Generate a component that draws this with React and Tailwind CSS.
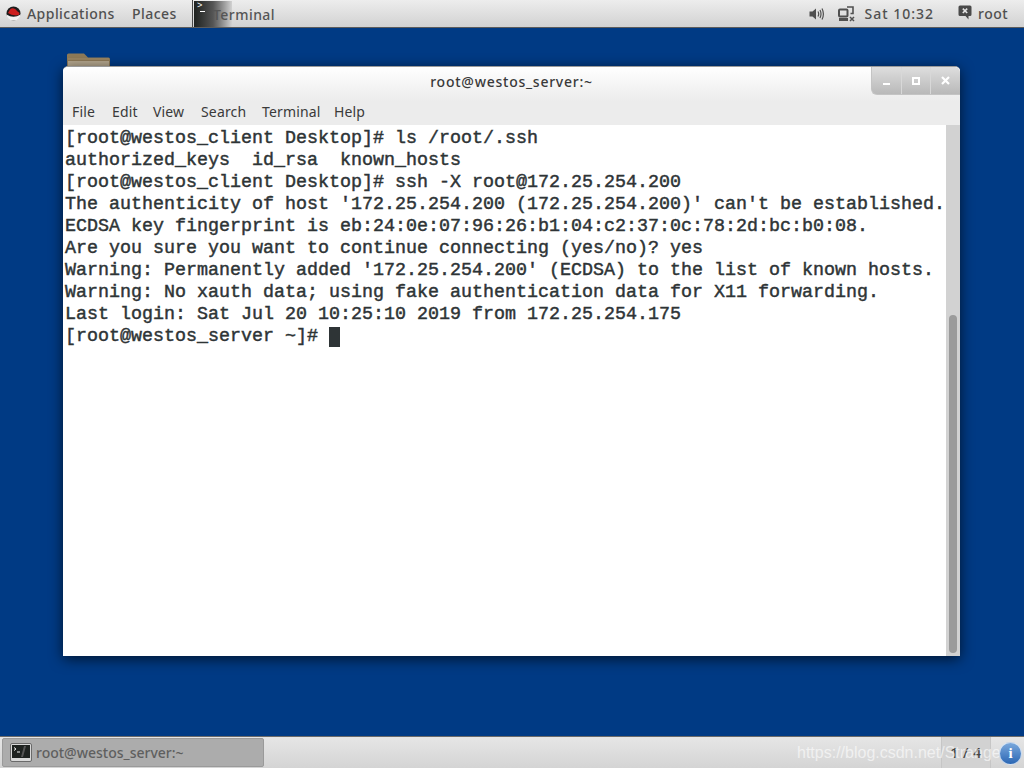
import React from 'react';

const terminalLines = [
  '[root@westos_client Desktop]# ls /root/.ssh',
  'authorized_keys  id_rsa  known_hosts',
  '[root@westos_client Desktop]# ssh -X root@172.25.254.200',
  "The authenticity of host '172.25.254.200 (172.25.254.200)' can't be established.",
  'ECDSA key fingerprint is eb:24:0e:07:96:26:b1:04:c2:37:0c:78:2d:bc:b0:08.',
  'Are you sure you want to continue connecting (yes/no)? yes',
  "Warning: Permanently added '172.25.254.200' (ECDSA) to the list of known hosts.",
  'Warning: No xauth data; using fake authentication data for X11 forwarding.',
  'Last login: Sat Jul 20 10:25:10 2019 from 172.25.254.175',
];

const menuItems = [
  { label: 'File', className: 'w-[40px]' },
  { label: 'Edit', className: 'w-[41px]' },
  { label: 'View', className: 'w-[48px]' },
  { label: 'Search', className: 'w-[61px]' },
  { label: 'Terminal', className: 'w-[72px]' },
  { label: 'Help', className: 'w-[40px]' },
];

function RedHatLogo() {
  return (
    <svg width="15" height="15" viewBox="0 0 15 15">
      <circle cx="7.5" cy="7.5" r="7" fill="#1c1c1c" />
      <path d="M0.5 8.5 Q7.5 13 14.5 8.5 Q14 14.5 7.5 14.5 Q1 14.5 0.5 8.5Z" fill="#f2f2f2" />
      <path d="M2 7 L4 3.5 Q6 1.5 8 2.5 Q10 3 11 5 L13.5 7 Q13.5 9.5 10 9.5 Q5 9 2 7Z" fill="#cc1f1f" />
    </svg>
  );
}

function SpeakerIcon() {
  return (
    <svg width="16" height="14" viewBox="0 0 16 14" fill="none">
      <path d="M0.5 4.5H3.5L7 1.5V12.5L3.5 9.5H0.5Z" fill="#505050" />
      <path d="M9 4.5Q10.4 7 9 9.5M11 3Q13 7 11 11M13 1.5Q15.8 7 13 12.5" stroke="#505050" strokeWidth="1.2" />
    </svg>
  );
}

function NetworkIcon() {
  return (
    <svg width="17" height="16" viewBox="0 0 17 16" fill="none">
      <rect x="1" y="3.5" width="8.5" height="7" rx="1" stroke="#505050" strokeWidth="2" />
      <path d="M9 1H15V7.5H12.5" stroke="#505050" strokeWidth="1.6" />
      <rect x="1" y="12" width="9" height="3" fill="#505050" />
      <path d="M12 11L16 15M16 11L12 15" stroke="#505050" strokeWidth="1.5" />
    </svg>
  );
}

function ChatIcon() {
  return (
    <svg width="14" height="15" viewBox="0 0 14 15">
      <path d="M2 0.5H12Q13.5 0.5 13.5 2V9.5Q13.5 11 12 11H10.5V14.5L7.5 11H2Q0.5 11 0.5 9.5V2Q0.5 0.5 2 0.5Z" fill="#4a4a4a" />
      <path d="M4.8 3.6L9.2 8M9.2 3.6L4.8 8" stroke="#e4e4e4" strokeWidth="1.6" />
    </svg>
  );
}

function FolderIcon() {
  return (
    <svg width="44" height="14" viewBox="0 0 44 14">
      <path d="M0 14V2Q0 0.5 1.5 0.5H17L21 4.5H41.5Q43 4.5 43 6V14Z" fill="#8e7a58" />
      <rect x="1" y="8" width="41" height="6" fill="#b5a78e" />
      <rect x="1" y="5.5" width="41" height="1" fill="#a38e6b" />
    </svg>
  );
}

function TerminalTaskIcon() {
  return (
    <svg width="22" height="19" viewBox="0 0 22 19">
      <rect x="0.5" y="0.5" width="21" height="18" rx="1.5" fill="#d8d8d8" stroke="#6a6a6a" />
      <rect x="2" y="2" width="18" height="13" fill="#1e2220" />
      <path d="M4 4.5L6 6L4 7.5" stroke="#eee" fill="none" />
      <path d="M7 9H10" stroke="#eee" />
      <path d="M14 3L11 14H13L16 3Z" fill="#555" />
    </svg>
  );
}

function TopBar() {
  return (
    <header className="h-[28px] shrink-0 flex items-center bg-gradient-to-b from-[#ededed] to-[#d2d2d2] border-b border-[#5c5c5c] text-[#505050] font-['Noto_Sans',sans-serif] font-medium text-[14px] tracking-[0.45px]">
      <div className="ml-[6px] w-[21px]">
        <RedHatLogo />
      </div>
      <span className="w-[105px]">Applications</span>
      <span className="w-[60px]">Places</span>
      <div className="relative h-full border-l border-[#4a4a4a] pl-[1px] flex items-center">
        <div className="h-[26px] w-[38px] bg-gradient-to-r from-[#1f2220] via-[#555] to-[#d2d2d2] relative">
          <span className="absolute left-[3px] top-[0px] text-[9px] leading-[11px] text-white font-['Liberation_Mono',monospace]">&gt;</span>
          <span className="absolute left-[6px] top-[10px] w-[5px] h-[1px] bg-white" />
        </div>
        <span className="absolute left-[20px] top-[4px] text-[#555]">Terminal</span>
      </div>
      <div className="ml-auto flex items-center">
        <SpeakerIcon />
        <div className="ml-[13px]">
          <NetworkIcon />
        </div>
        <span className="ml-[10px] tracking-[1px]">Sat 10:32</span>
        <div className="ml-[24px] mb-[3px]">
          <ChatIcon />
        </div>
        <span className="ml-[6px] mr-[16px]">root</span>
      </div>
    </header>
  );
}

function WindowButtons() {
  return (
    <div className="absolute right-0 top-0 h-[28px] w-[89px] flex rounded-bl-[6px] rounded-tr-[5px] bg-gradient-to-b from-[#dedede] to-[#b9b9b9] border-b border-l border-[#c4c4c4]">
      <div className="flex-1 flex justify-center items-end pb-[9px] border-r border-[#d8d8d8]">
        <span className="w-[7px] h-[2px] bg-white" />
      </div>
      <div className="flex-1 flex justify-center items-center border-r border-[#d8d8d8]">
        <span className="w-[8px] h-[8px] border-2 border-white" />
      </div>
      <div className="flex-1 flex justify-center items-center">
        <svg width="9" height="9" viewBox="0 0 9 9">
          <path d="M1 1L8 8M8 1L1 8" stroke="#fff" strokeWidth="2.2" />
        </svg>
      </div>
    </div>
  );
}

function TerminalWindow() {
  return (
    <div className="relative ml-[63px] mt-[38px] w-[897px] h-[590px] flex flex-col bg-white rounded-t-[5px] border-t border-[#9a9a9a] shadow-[0_3px_14px_rgba(0,0,0,0.65)] overflow-hidden">
      <div className="relative h-[34px] shrink-0 flex items-center justify-center bg-gradient-to-b from-[#ffffff] to-[#ececec] text-[14px] tracking-[0.75px] text-[#3a3a3a] font-medium font-['Noto_Sans',sans-serif] pb-[5px]">
        root@westos_server:~
        <WindowButtons />
      </div>
      <nav className="h-[24px] shrink-0 flex items-center pl-[9px] pb-[3px] bg-[#ececec] text-[#3a3a3a] text-[14px] tracking-[0.15px] font-['Noto_Sans',sans-serif]">
        {menuItems.map(item => (
          <span key={item.label} className={item.className}>{item.label}</span>
        ))}
      </nav>
      <div className="flex-1 flex min-h-0">
        <div className="flex-1 pl-[2px] pt-[3px] text-[#2e3436] font-normal [-webkit-text-stroke:0.45px_#2e3436] font-['Liberation_Mono',monospace] text-[18.33px] leading-[22px] whitespace-pre">
          {terminalLines.map(line => (
            <div key={line}>{line}</div>
          ))}
          <div className="flex items-center">
            <span>[root@westos_server ~]# </span>
            <span className="w-[11px] h-[20px] bg-[#2e3436]" />
          </div>
        </div>
        <div className="w-[14px] shrink-0 bg-[#d2d2d2] pt-[190px] pb-[3px] flex justify-center">
          <div className="w-[8px] h-full rounded-t-[4px] rounded-b-[4px] bg-[#9b9b9b]" />
        </div>
      </div>
    </div>
  );
}

function BottomBar() {
  return (
    <footer className="relative h-[32px] shrink-0 flex items-stretch bg-gradient-to-b from-[#e6e6e6] to-[#d4d4d4] border-t border-[#6a6a6a] font-['Noto_Sans',sans-serif] text-[14px] text-[#5f5f5f] font-medium">
      <div className="ml-[2px] my-[1px] w-[262px] flex items-center gap-[4px] pl-[7px] bg-[#acacac] rounded-[2px] border border-[#9a9a9a]">
        <TerminalTaskIcon />
        <span>root@westos_server:~</span>
      </div>
      <div className="ml-auto mr-[33px] w-[50px] flex items-center justify-center bg-[#d2d2d2] border-x border-[#c6c6c6] text-[#444] tracking-[0.6px]">
        1 / 4
      </div>
      <span className="absolute left-[797px] top-[4px] text-[16px] text-white/60 font-normal font-['Liberation_Sans',sans-serif]">https://blog.csdn.net/StrangerH</span>
      <div className="absolute right-[2px] top-[5px] w-[23px] h-[23px] rounded-full bg-gradient-to-b from-[#7aa8dc] to-[#2b67b4] border border-white/70 flex items-center justify-center text-white text-[15px] font-bold font-['Liberation_Serif',serif]">
        i
      </div>
    </footer>
  );
}

export default function App() {
  return (
    <div className="h-[768px] w-[1024px] flex flex-col overflow-hidden bg-[#003a84]">
      <TopBar />
      <main className="relative flex-1 min-h-0">
        <div className="absolute left-[67px] top-[25px]">
          <FolderIcon />
        </div>
        <TerminalWindow />
      </main>
      <BottomBar />
    </div>
  );
}
